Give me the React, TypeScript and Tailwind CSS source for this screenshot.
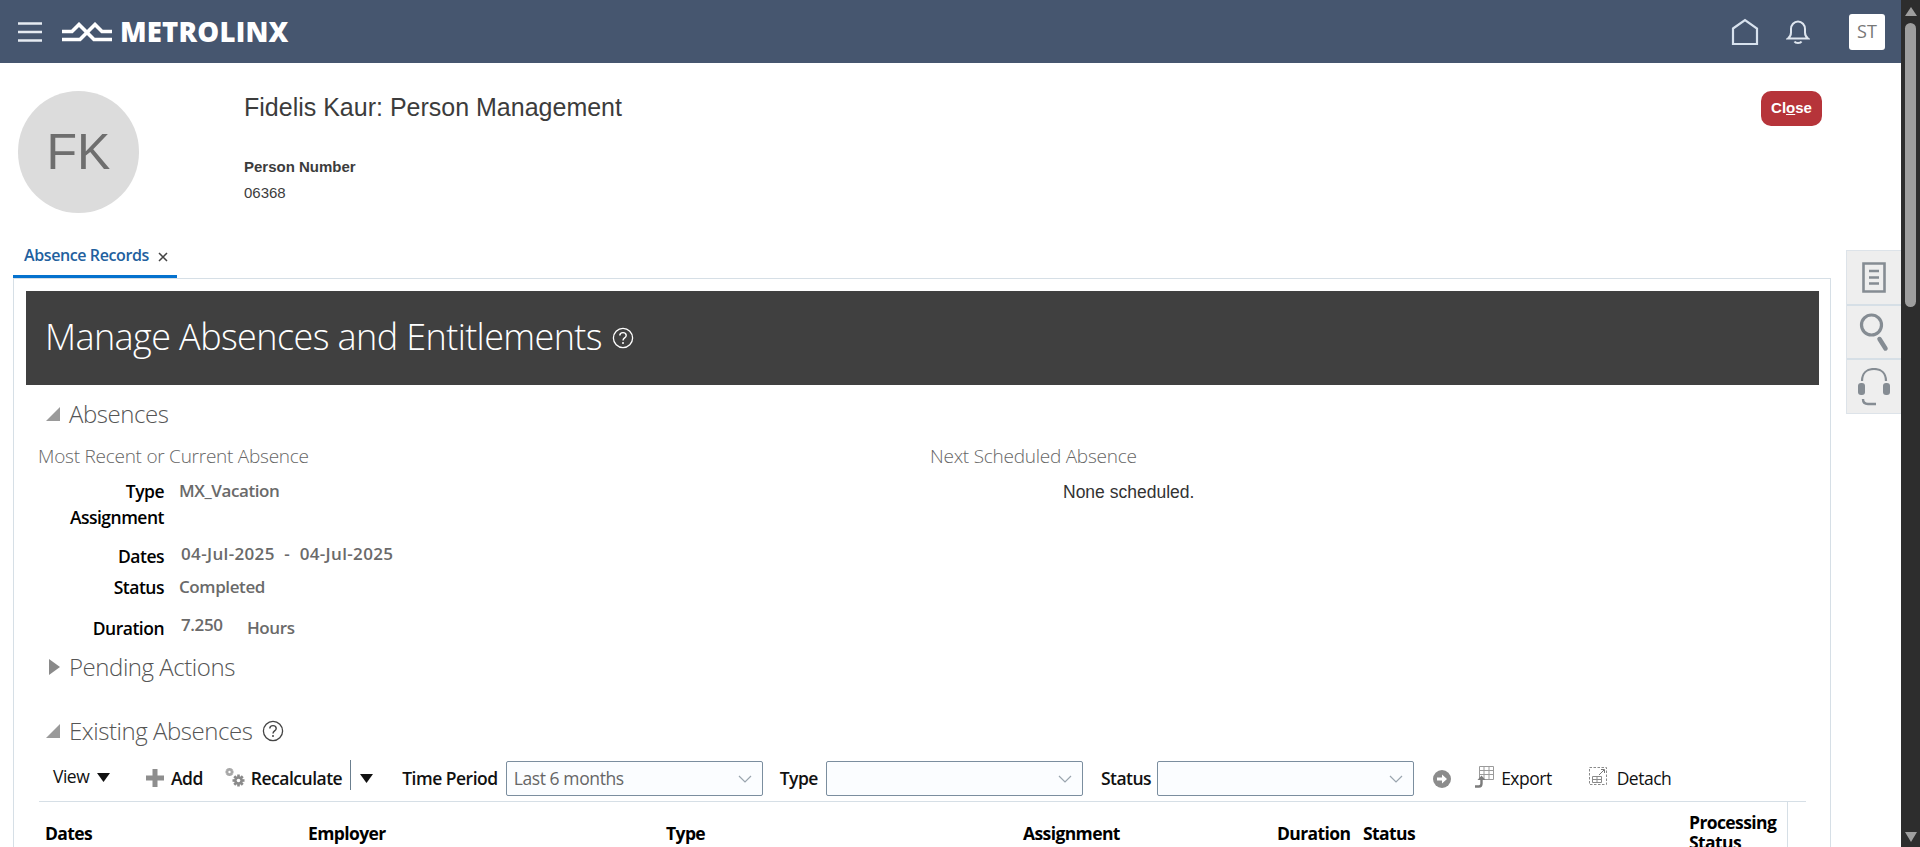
import React from "react";

const seg = "font-['Open_Sans',sans-serif]";
const ari = "font-['Liberation_Sans',Arial,sans-serif]";
const val = "text-[17px] font-semibold text-[#6a6a6a] tracking-[-0.4px]";
const sec = "ml-[9px] text-[24px] font-light text-[#555] tracking-[-0.45px]";
const sub = "text-[19px] font-light text-[#666] leading-[24px] tracking-[-0.25px]";

function Help({ size = 22, cls = "" }: { size?: number; cls?: string }) {
  return (
    <svg width={size} height={size} viewBox="0 0 22 22" className={cls} fill="none" stroke="currentColor">
      <circle cx="11" cy="11" r="9.6" strokeWidth="1.3" />
      <path d="M7.8 8.6c0-1.9 1.4-3 3.2-3s3.2 1.1 3.2 2.8c0 2.5-3.2 2.5-3.2 5" strokeWidth="1.4" />
      <circle cx="11" cy="16" r="1" fill="currentColor" stroke="none" />
    </svg>
  );
}

function Tri({ open }: { open: boolean }) {
  return open ? (
    <svg width="14" height="14" viewBox="0 0 14 14"><path d="M14 0v14H0z" fill="#9a9a9a" /></svg>
  ) : (
    <svg width="11" height="16" viewBox="0 0 11 16"><path d="M0 0l11 8-11 8z" fill="#8a8a8a" /></svg>
  );
}

function Chevron() {
  return (
    <svg width="14" height="8" viewBox="0 0 14 8" fill="none" stroke="#9aa5ae" strokeWidth="1.2"><path d="M1 1l6 6 6-6" /></svg>
  );
}

function Caret() {
  return <svg width="13" height="9" viewBox="0 0 13 9"><path d="M0 0h13L6.500 9z" fill="#111" /></svg>;
}

function Gear({ cx, cy, r, fill }: { cx: number; cy: number; r: number; fill: string }) {
  const teeth = [0, 45, 90, 135];
  return (
    <g fill={fill}>
      {teeth.map((a) => (
        <rect key={a} x={cx - 1.3} y={cy - r} width={2.6} height={r * 2} transform={`rotate(${a} ${cx} ${cy})`} />
      ))}
      <circle cx={cx} cy={cy} r={r * 0.72} />
      <circle cx={cx} cy={cy} r={r * 0.3} fill="#fff" />
    </g>
  );
}

function Select({ value, w }: { value?: string; w: string }) {
  return (
    <div className={`${w} h-[35px] flex items-center justify-between pl-[7px] pr-[10px] bg-[#fbfdff] border border-[#7b8e9f] rounded-[2px] font-normal text-[17.5px] tracking-[-0.4px] text-[#666]`}>
      <span>{value}</span>
      <Chevron />
    </div>
  );
}

function Field({ label, children }: { label: string; children?: React.ReactNode }) {
  return (
    <div className="flex">
      <div className="w-[126px] text-right font-semibold text-[17.5px] tracking-[-0.5px] text-black">{label}</div>
      {children}
    </div>
  );
}

export default function App() {
  return (
    <div className="h-[847px] w-[1920px] flex overflow-hidden bg-white">
      <div className="w-[1901px] flex flex-col">
        <header className="h-[63px] shrink-0 bg-[#46566f] flex items-center pl-[18px] pr-[16px]">
          <svg width="24" height="22" viewBox="0 0 24 22" stroke="#e6ebf2" strokeWidth="2.400">
            <path d="M0 2.500h24M0 11h24M0 19.500h24" />
          </svg>
          <svg width="50" height="20" viewBox="0 0 50 20" className="ml-[20px]" fill="none" stroke="#fff" strokeWidth="3.600">
            <path d="M0 9.500H10L17 2.500 32 17.500H50" />
            <path d="M0 17.500H18L33 2.500 40 9.500H50" />
          </svg>
          <span className={`${seg} ml-[8px] font-extrabold text-[27.500px] leading-none text-white tracking-[0.2px]`}>METROLINX</span>
          <div className="ml-auto flex items-center">
            <svg width="28" height="28" viewBox="0 0 28 28" fill="none" stroke="#d8e2ee" strokeWidth="2.200">
              <path d="M2 10.500L14 2l12 8.500V26H2z" />
            </svg>
            <svg width="24" height="26" viewBox="0 0 24 26" fill="none" stroke="#dfe6ef" strokeWidth="2" className="ml-[27px]">
              <path d="M2 19.500c2-1.500 3-3 3-6V10c0-4 3-7.500 7-7.500s7 3.500 7 7.500v3.500c0 3 1 4.500 3 6z" />
              <path d="M8.500 22.500c1 2 6 2 7 0" />
            </svg>
            <div className={`${seg} ml-[39px] w-[36px] h-[36px] rounded-[3px] bg-white flex items-center justify-center text-[18px] text-[#777]`}>ST</div>
          </div>
        </header>

        <section className="h-[182px] shrink-0 flex pl-[18px] pr-[79px] pt-[28px]">
          <div className={`${ari} w-[121px] h-[122px] rounded-full bg-[#dcdcdc] flex items-center justify-center text-[50px] text-[#6e6e6e]`}>FK</div>
          <div className={`${ari} ml-[105px] flex flex-col text-[#3c3c3c]`}>
            <div className="text-[25px] leading-[32px]">Fidelis Kaur: Person Management</div>
            <div className="mt-[35px] text-[15px] leading-[18px] font-bold">Person Number</div>
            <div className="mt-[8px] text-[15px] leading-[18px]">06368</div>
          </div>
          <div className={`${ari} ml-auto w-[61px] h-[35px] rounded-[10px] bg-[#b6343a] flex items-center justify-center text-white text-[15px] font-bold`}>
            <span>Cl<u>o</u>se</span>
          </div>
        </section>

        <div className="relative flex-1 flex pl-[13px] pr-[70px]">
          <div className="flex-1 flex flex-col">
            <div className={`${seg} w-[164px] h-[33px] shrink-0 pl-[11px] flex items-start border-b-[3px] border-[#0572ce] text-[#22609e] text-[16px] font-semibold leading-[20px] tracking-[-0.4px]`}>
              <span>Absence Records</span>
              <svg width="10" height="10" viewBox="0 0 10 10" className="ml-[9px] mt-[7px]" stroke="#444" strokeWidth="1.500"><path d="M1 1l8 8M9 1l-8 8" /></svg>
            </div>
            <div className={`${seg} flex-1 border border-[#d6dfe6] pl-[12px] pr-[11px] pt-[12px]`}>
              <div className="h-[94px] bg-[#404040] flex items-center pl-[19px] text-white">
                <span className="text-[36px] font-light tracking-[-0.6px] -mt-[3px]">Manage Absences and Entitlements</span>
                <Help cls="ml-[10px]" />
              </div>

              <div className="mt-[14px] pl-[20px] flex items-center h-[30px]">
                <Tri open />
                <span className={sec}>Absences</span>
              </div>

              <div className="flex mt-[15px]">
                <div className="w-[904px] pl-[12px]">
                  <div className={sub}>Most Recent or Current Absence</div>
                  <div className="mt-[11px] flex flex-col leading-[24px]">
                    <Field label="Type"><span className={`ml-[15px] ${val}`}>MX_Vacation</span></Field>
                    <div className="mt-[2px]"><Field label="Assignment" /></div>
                    <div className="mt-[15px]">
                      <Field label="Dates">
                        <span className={`ml-[17px] -mt-[2px] ${val} tracking-[0.35px]`}>04-Jul-2025&nbsp;&nbsp;-&nbsp;&nbsp;04-Jul-2025</span>
                      </Field>
                    </div>
                    <div className="mt-[7px]"><Field label="Status"><span className={`ml-[15px] ${val}`}>Completed</span></Field></div>
                    <div className="mt-[17px]">
                      <Field label="Duration">
                        <span className={`ml-[17px] -mt-[3px] w-[66px] ${val}`}>7.250</span>
                        <span className={val}>Hours</span>
                      </Field>
                    </div>
                  </div>
                </div>
                <div>
                  <div className={sub}>Next Scheduled Absence</div>
                  <div className={`${ari} mt-[13px] ml-[133px] text-[17.500px] leading-[22px] text-[#333]`}>None scheduled.</div>
                </div>
              </div>

              <div className="mt-[11px] pl-[23px] flex items-center h-[32px]">
                <Tri open={false} />
                <span className={sec}>Pending Actions</span>
              </div>

              <div className="mt-[33px] pl-[20px] flex items-center h-[30px]">
                <Tri open />
                <span className={sec}>Existing Absences</span>
                <Help cls="ml-[10px] text-[#444]" />
              </div>

              <div className="mt-[15px] ml-[13px] w-[1767px] h-[41px] flex items-start border-b border-[#d6dfe6] text-[17.500px] font-semibold tracking-[-0.5px] text-[#111]">
                <div className="h-[35px] flex items-center w-[107px] pl-[14px] font-normal">
                  <span className="-mt-[4px]">View</span><span className="ml-[8px] -mt-[2px]"><Caret /></span>
                </div>
                <div className="h-[35px] flex items-center">
                  <svg width="18" height="18" viewBox="0 0 18 18" className="-mt-[2px]"><path d="M6.500 0h5v6.500H18v5h-6.500V18h-5v-6.500H0v-5h6.500z" fill="#8e8e8e" /></svg>
                  <span className="ml-[7px]">Add</span>
                </div>
                <div className="h-[35px] flex items-center ml-[22px]">
                  <svg width="21" height="20" viewBox="0 0 21 20" className="-mt-[3px]">
                    <Gear cx={4.500} cy={5} r={4} fill="#a8a8a8" />
                    <Gear cx={13.500} cy={13.500} r={6} fill="#8a8a8a" />
                  </svg>
                  <span className="ml-[5px]">Recalculate</span>
                </div>
                <div className="ml-[8px] -mt-[1px] w-px h-[30px] bg-[#6b7f8f]" />
                <div className="h-[35px] flex items-center ml-[9px]"><Caret /></div>
                <div className="h-[35px] flex items-center ml-[29px]">Time Period</div>
                <div className="ml-[8px]"><Select w="w-[257px]" value="Last 6 months" /></div>
                <div className="h-[35px] flex items-center ml-[17px]">Type</div>
                <div className="ml-[8px]"><Select w="w-[257px]" /></div>
                <div className="h-[35px] flex items-center ml-[18px]">Status</div>
                <div className="ml-[6px]"><Select w="w-[257px]" /></div>
                <div className="h-[35px] flex items-center ml-[19px]">
                  <svg width="18" height="18" viewBox="0 0 18 18"><circle cx="9" cy="9" r="9" fill="#8c8c8c" /><path d="M4 7.500h5V4.500l5 4.500-5 4.500v-3H4z" fill="#fff" /></svg>
                </div>
                <div className="h-[35px] flex items-center ml-[24px]">
                  <svg width="20" height="22" viewBox="0 0 20 22" className="-mt-[3px]" fill="none">
                    <path d="M4.500 .500h14v13h-14zM4.500 4.500h14M4.500 8.500h14M9 .500v13M14 .500v13" stroke="#9a9a9a" />
                    <path d="M0 20.500h4c2 0 2.500-1 2.500-3V13" stroke="#7c7c7c" strokeWidth="2.400" />
                    <path d="M2.500 14l4-4.500 4 4.500z" fill="#7c7c7c" />
                  </svg>
                  <span className="ml-[6px] font-normal">Export</span>
                </div>
                <div className="h-[35px] flex items-center ml-[37px]">
                  <svg width="20" height="20" viewBox="0 0 20 20" fill="none" className="-mt-[3px]">
                    <path d="M.500 .500h17v17H.500z" stroke="#8a8a8a" strokeDasharray="2.500 1.500" />
                    <path d="M3.500 9.500h9v6h-9zM3.500 12.500h9M8 9.500v6" stroke="#8a8a8a" />
                    <path d="M10 8l5-5M12 2.500h3.500V6" stroke="#777" />
                  </svg>
                  <span className="ml-[8px] font-normal">Detach</span>
                </div>
              </div>

              <div className="ml-[13px] w-[1749px] grid grid-cols-[269px_358px_357px_254px_86px_326px_99px] text-[17.500px] font-bold tracking-[-0.6px] text-black leading-[20px]">
                <div className="pl-[6px] pt-[21px]">Dates</div>
                <div className="pt-[21px]">Employer</div>
                <div className="pt-[21px]">Type</div>
                <div className="pt-[21px]">Assignment</div>
                <div className="pt-[21px]">Duration</div>
                <div className="pt-[21px]">Status</div>
                <div className="border-r border-[#d6dfe6] h-[60px] pt-[10px]">Processing Status</div>
              </div>
            </div>
          </div>

          <div className="absolute right-0 top-[5px] w-[55px] h-[164px] flex flex-col bg-[#eeeeee] border border-r-0 border-[#dde3e9]">
            <div className="flex-1 flex items-center justify-center border-b-[2px] border-[#d6dfe6]">
              <svg width="24" height="31" viewBox="0 0 24 31" fill="none" stroke="#858c93">
                <path d="M1.500 1.500h21v28h-21z" strokeWidth="2.600" />
                <path d="M7 9h10M7 15.500h10M7 21.500h10" strokeWidth="2.400" />
              </svg>
            </div>
            <div className="flex-1 flex items-center justify-center border-b-[2px] border-[#d6dfe6]">
              <svg width="30" height="39" viewBox="0 0 30 39" fill="none" stroke="#858c93">
                <circle cx="12.500" cy="12" r="10" strokeWidth="3.200" />
                <path d="M20.500 26l6 9.500" strokeWidth="4.500" strokeLinecap="round" />
              </svg>
            </div>
            <div className="flex-1 flex items-center justify-center">
              <svg width="34" height="38" viewBox="0 0 34 38" fill="none" stroke="#858c93">
                <path d="M5 13C5 5 10 1 17 1s12 4 12 12" strokeWidth="2.200" />
                <rect x="1" y="15" width="7" height="12" rx="3" fill="#858c93" stroke="none" />
                <rect x="26" y="15" width="7" height="12" rx="3" fill="#858c93" stroke="none" />
                <path d="M6 31c0 3 2 5 5 5h8" strokeWidth="2.400" />
              </svg>
            </div>
          </div>
        </div>
      </div>

      <div className="w-[19px] shrink-0 bg-[#2d2d2d] flex flex-col items-center">
        <svg width="12" height="9" viewBox="0 0 12 9" className="mt-[7px]"><path d="M6 0l6 9H0z" fill="#9e9e9e" /></svg>
        <div className="mt-[7px] w-[11px] h-[284px] rounded-[6px] bg-[#9e9e9e]" />
        <svg width="12" height="10" viewBox="0 0 12 10" className="mt-auto mb-[5px]"><path d="M0 0h12L6 10z" fill="#9e9e9e" /></svg>
      </div>
    </div>
  );
}
